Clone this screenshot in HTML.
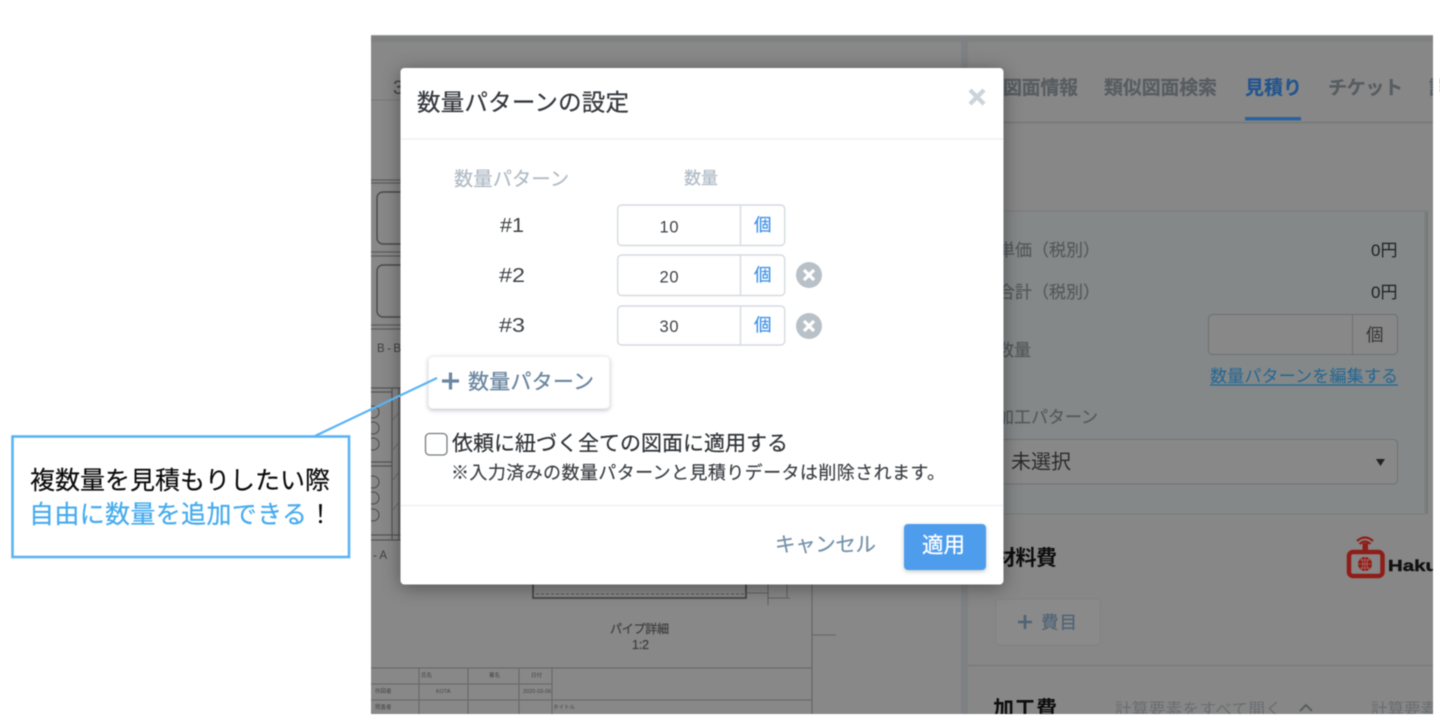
<!DOCTYPE html>
<html lang="ja"><head><meta charset="utf-8"><title>数量パターンの設定</title>
<style>
html,body{margin:0;padding:0;background:#fff;width:1440px;height:723px;overflow:hidden}
svg{display:block;position:absolute;left:0;top:0}
text{font-family:"Liberation Sans","Noto Sans CJK JP",sans-serif}
</style></head><body>
<svg width="1440" height="723" viewBox="0 0 1440 723" xmlns="http://www.w3.org/2000/svg">
<defs>
<clipPath id="cl"><rect x="371" y="35" width="1062" height="679"/></clipPath>
<filter id="s" x="-10%" y="-10%" width="120%" height="125%" color-interpolation-filters="sRGB"><feDropShadow dx="0" dy="3" stdDeviation="9" flood-color="#000" flood-opacity=".38"/></filter>
<filter id="s2" x="-10%" y="-10%" width="120%" height="130%" color-interpolation-filters="sRGB"><feDropShadow dx="0" dy="1.5" stdDeviation="2" flood-color="#20303f" flood-opacity=".28"/></filter>
</defs>
<g style="filter:blur(0.4px)">
<rect x="0" y="0" width="1440" height="723" fill="#fff"/>
<!-- background screenshot -->
<rect x="371" y="35" width="1062" height="679" fill="#888"/>
<rect x="371" y="35" width="1062" height="7" fill="#7f8181"/>
<rect x="961" y="35" width="7" height="679" fill="#7e8183"/>
<rect x="371" y="35" width="1062" height="1" fill="#9a9a9a"/>
<rect x="968" y="42" width="465" height="672" rx="3" fill="#878787"/>
<!-- left drawing -->
<g stroke="#4a4a4a" fill="none" clip-path="url(#cl)">
<line x1="371" y1="100" x2="960" y2="100" stroke="#777"/>
<path d="M371 180H401M371 183H401M371 252H401M371 256H401M371 325H401M371 329H401" stroke="#5c5c5c" stroke-width="1.2"/>
<path d="M401 192H383a6 6 0 0 0-6 6V238a6 6 0 0 0 6 6H401" stroke-width="1.4"/>
<path d="M401 265H383a6 6 0 0 0-6 6V311a6 6 0 0 0 6 6H401" stroke-width="1.4"/>
<path d="M371 388H401M371 392H392M392 388V540M399 388V540M371 462H392M371 466H392M371 535H401M371 540H401" stroke="#555" stroke-width="1.2"/>
<circle cx="373" cy="412" r="6"/><circle cx="373" cy="428" r="6"/><circle cx="373" cy="444" r="6"/>
<circle cx="373" cy="482" r="6"/><circle cx="373" cy="498" r="6"/><circle cx="373" cy="515" r="6"/>
<path d="M393 420L399 412M393 450L399 442M393 480L399 472M393 510L399 502" stroke="#666" stroke-width=".8"/>
<path d="M533 584V598H746V584" stroke="#484848" stroke-width="1.8"/>
<path d="M536 594H744" stroke="#555" stroke-dasharray="3 2" stroke-width=".9"/>
<path d="M746 593H768M768 584V605M787 584V597M768 598H790" stroke="#555" stroke-width=".8"/>
<path d="M812 584V714M812 635H836" stroke="#666" stroke-width="1.1"/>
<path d="M371 668H812M371 684H552M371 700H812M419 668V714M468 668V714M519 668V714M552 668V714" stroke="#666" stroke-width="1"/>
</g>
<g fill="#404040">
<text x="393" y="94" font-size="19">3</text>
<text x="377" y="352" font-size="11.5" textLength="24">B - B</text>
<text x="373" y="559" font-size="11.5">- A</text>
<text x="610" y="633" font-size="12" textLength="59" stroke="#404040" stroke-width=".25">パイプ詳細</text>
<text x="632" y="649" font-size="12.5" textLength="17" stroke="#404040" stroke-width=".25">1:2</text>
<g font-size="5.5" fill="#444">
<text x="421" y="677">氏名</text><text x="489" y="677">署名</text><text x="531" y="677">日付</text>
<text x="375" y="693">作図者</text><text x="436" y="693">KOTA</text><text x="523" y="693">2020-03-06</text>
<text x="375" y="709">照査者</text><text x="553" y="709">タイトル</text>
</g>
</g>
<!-- right pane -->
<line x1="968" y1="122.500" x2="1433" y2="122.500" stroke="#767878" stroke-width="1.500"/>
<g font-size="19" fill="#585d61" font-weight="700" stroke="#585d61" stroke-width=".2">
<text x="1003" y="94" textLength="75">図面情報</text>
<text x="1104" y="94" textLength="113">類似図面検索</text>
<text x="1245" y="94" textLength="57" fill="#23558f" stroke="#23558f">見積り</text>
<text x="1328" y="94" textLength="75">チケット</text>
<text x="1429" y="94">詳</text>
</g>
<rect x="1245" y="117" width="56" height="3.500" fill="#2b639f"/>
<rect x="990" y="211" width="435" height="303" fill="#848888" stroke="#797c7d"/>
<rect x="1426" y="211" width="2" height="303" fill="#75787a"/>
<g font-size="17" fill="#55595c" stroke="#55595c" stroke-width=".2">
<text x="998" y="256">単価（税別）</text>
<text x="998" y="298">合計（税別）</text>
<text x="997" y="356">数量</text>
<text x="997" y="423" textLength="101">加工パターン</text>
</g>
<g font-size="17" fill="#1e2022">
<text x="1371" y="256">0円</text>
<text x="1371" y="298">0円</text>
</g>
<rect x="1208.500" y="314.500" width="189" height="40" rx="4" fill="#888" stroke="#6c7072"/>
<line x1="1352.500" y1="315" x2="1352.500" y2="354" stroke="#6c7072"/>
<text x="1366" y="341" font-size="17.500" fill="#333537">個</text>
<text x="1210" y="382" font-size="17" textLength="188" fill="#236795">数量パターンを編集する</text>
<line x1="1210" y1="385" x2="1398" y2="385" stroke="#236795" stroke-width="1.200"/>
<rect x="990" y="439.500" width="407.500" height="44.500" rx="4" fill="#888" stroke="#6f7375"/>
<text x="1011" y="468.500" font-size="20" fill="#2b2b2b">未選択</text>
<path d="M1376 459H1385L1380.500 466Z" fill="#222"/>
<text x="995" y="565" font-size="21" font-weight="700" fill="#0e0e0e" textLength="62">材料費</text>
<rect x="995.500" y="599" width="105" height="46" rx="4" fill="#8a8a8a" stroke="#818181"/>
<path d="M1018 622H1032M1025 615V629" stroke="#4f6375" stroke-width="2.600"/>
<text x="1041" y="628.500" font-size="17.500" fill="#4f6375" textLength="36" stroke="#4f6375" stroke-width=".2">費目</text>
<line x1="968" y1="665.500" x2="1433" y2="665.500" stroke="#797979" stroke-width="1.200"/>
<text x="993" y="716" font-size="21" font-weight="700" fill="#0e0e0e" textLength="64">加工費</text>
<text x="1115" y="715" font-size="16.500" fill="#6a6e71" textLength="167">計算要素をすべて開く</text>
<path d="M1300 711L1306 705L1312 711" fill="none" stroke="#5a5e61" stroke-width="2"/>
<text x="1371" y="715" font-size="16.500" fill="#6a6e71">計算要素</text>
<!-- logo -->
<g>
<rect x="1349" y="552" width="33.500" height="24" rx="4" fill="none" stroke="#8f1d18" stroke-width="4.500"/>
<rect x="1362.500" y="543" width="5.500" height="9" fill="#8f1d18"/>
<circle cx="1365" cy="564" r="7" fill="#8f1d18"/>
<path d="M1358 564H1372M1365 557V571M1360 560H1370M1360 568H1370M1361 558Q1365 564 1361 570M1369 558Q1365 564 1369 570" fill="none" stroke="#b5807c" stroke-width=".6"/>
<path d="M1357 541Q1365 534 1373 541M1359.500 544Q1365 539 1370.500 544" fill="none" stroke="#8f1d18" stroke-width="2.200"/>
<text x="1388" y="571" font-size="16" font-weight="700" fill="#111" stroke="#111" stroke-width=".4" textLength="50" lengthAdjust="spacingAndGlyphs">Haku</text>
</g>
<!-- white clip -->
<rect x="1433" y="0" width="7" height="723" fill="#fff"/>
<rect x="0" y="714" width="1440" height="9" fill="#fff"/>
<!-- dialog -->
<rect x="400.500" y="68" width="603" height="516.500" rx="4" fill="#fff" filter="url(#s)"/>
<text x="417" y="110.500" font-size="23.500" fill="#33383d" textLength="212" stroke="#33383d" stroke-width=".2">数量パターンの設定</text>
<path d="M970 90L984 104M984 90L970 104" stroke="#ccd3d9" stroke-width="4.200"/>
<line x1="401" y1="139" x2="1003" y2="139" stroke="#eceff2" stroke-width="1.300"/>
<text x="454" y="185.500" font-size="19.200" fill="#b0bbc5" textLength="115" stroke="#b0bbc5" stroke-width=".2">数量パターン</text>
<text x="684" y="184" font-size="17" fill="#b0bbc5" textLength="34" stroke="#b0bbc5" stroke-width=".2">数量</text>
<g font-size="20" fill="#3f4347">
<text x="500" y="232" textLength="24" lengthAdjust="spacingAndGlyphs">#1</text>
<text x="499" y="282" textLength="26" lengthAdjust="spacingAndGlyphs">#2</text>
<text x="499" y="332" textLength="26" lengthAdjust="spacingAndGlyphs">#3</text>
</g>
<g fill="#fff" stroke="#d5dbe1" stroke-width="1.400">
<rect x="617.700" y="205" width="167" height="40.500" rx="4"/>
<rect x="617.700" y="255" width="167" height="40.500" rx="4"/>
<rect x="617.700" y="306" width="167" height="39" rx="4"/>
<path d="M740.500 205V245.500M740.500 255V295.500M740.500 306V345" fill="none"/>
</g>
<g font-size="16.500" fill="#3f4347">
<text x="659.500" y="232.500" textLength="19">10</text>
<text x="659.500" y="282.500" textLength="19">20</text>
<text x="659.500" y="332" textLength="19">30</text>
</g>
<g font-size="17.500" fill="#3f92e6" stroke="#3f92e6" stroke-width=".2">
<text x="754" y="231">個</text>
<text x="754" y="281">個</text>
<text x="754" y="331">個</text>
</g>
<circle cx="809" cy="275" r="13" fill="#b9c1c8"/>
<circle cx="809" cy="326" r="13" fill="#b9c1c8"/>
<path d="M804 270L814 280M814 270L804 280M804 321L814 331M814 321L804 331" stroke="#fff" stroke-width="3.200"/>
<rect x="428.500" y="356.500" width="181" height="52" rx="4" fill="#fff" stroke="#eef0f3" filter="url(#s2)"/>
<path d="M442 381H459M450.500 372.500V389.500" stroke="#6a86a0" stroke-width="3.200"/>
<text x="468" y="389" font-size="21" fill="#6a86a0" textLength="126" stroke="#6a86a0" stroke-width=".25">数量パターン</text>
<rect x="425.500" y="433.500" width="21.500" height="21.500" rx="4" fill="#fff" stroke="#777b7f" stroke-width="1.300"/>
<text x="452" y="450.500" font-size="21" fill="#2e3236" textLength="336" stroke="#2e3236" stroke-width=".2">依頼に紐づく全ての図面に適用する</text>
<text x="451" y="479" font-size="18" fill="#383d41" textLength="494" stroke="#383d41" stroke-width=".15">※入力済みの数量パターンと見積りデータは削除されます。</text>
<line x1="401" y1="505.500" x2="1003" y2="505.500" stroke="#eceff2" stroke-width="1.300"/>
<text x="775" y="551.500" font-size="20.500" fill="#7592aa" textLength="101" stroke="#7592aa" stroke-width=".2">キャンセル</text>
<rect x="904" y="524" width="82" height="46" rx="4" fill="#4e9ded" filter="url(#s2)"/>
<text x="922" y="552.500" font-size="21.500" fill="#fff" textLength="43" stroke="#fff" stroke-width=".25">適用</text>
<!-- callout -->
<line x1="315" y1="436" x2="437" y2="378" stroke="#5ab4f5" stroke-width="2.200"/>
<rect x="12.500" y="436.500" width="336.500" height="120.500" fill="#fff" stroke="#5ab4f5" stroke-width="2.600"/>
<text x="30" y="489" font-size="25" fill="#0a0a0a" textLength="300" stroke="#0a0a0a" stroke-width=".15">複数量を見積もりしたい際</text>
<text x="29" y="523" font-size="25" fill="#45abee" textLength="278" stroke="#45abee" stroke-width=".2">自由に数量を追加できる</text>
<text x="308" y="523" font-size="25" fill="#0a0a0a">！</text>
</g>
</svg>
</body></html>
